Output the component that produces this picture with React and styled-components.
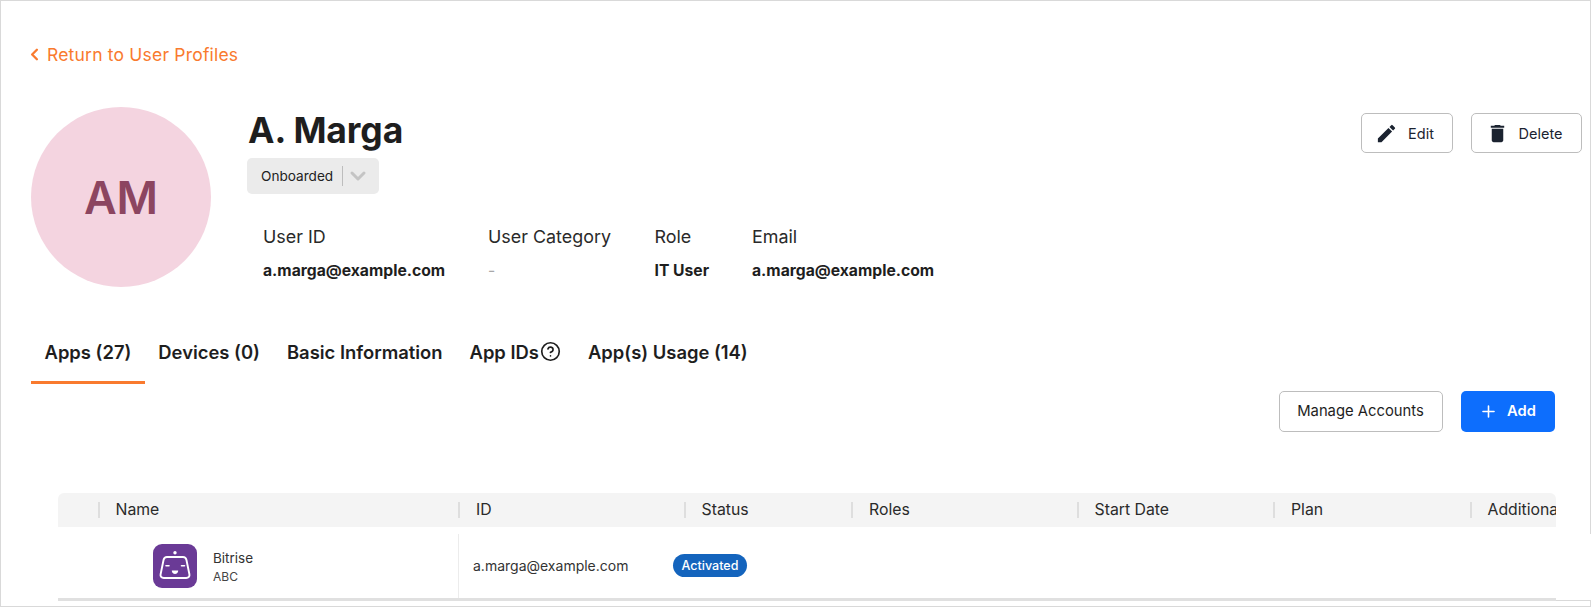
import React from 'react'
import styled, { createGlobalStyle } from 'styled-components'
import { ChevronLeft, ChevronDown, Plus, CircleHelp } from 'lucide-react'
import { MdEdit, MdDelete } from 'react-icons/md'

const Global = createGlobalStyle`
html, body {
  margin: 0;
  padding: 0;
  background: #fff;
  overflow: hidden;
}
* { box-sizing: border-box; }
body {
  font-family: Inter, "Noto Sans", sans-serif;
  color: #1e1e1e;
}
`

//================ data =====================================
const tabs = [
  { label: 'Apps (27)', active: true },
  { label: 'Devices (0)' },
  { label: 'Basic Information' },
  { label: 'App IDs', help: true },
  { label: 'App(s) Usage (14)' },
]

const info = [
  { label: 'User ID', value: 'a.marga@example.com', width: 225 },
  { label: 'User Category', value: '-', width: 166.5, muted: true },
  { label: 'Role', value: 'IT User', width: 97.5 },
  { label: 'Email', value: 'a.marga@example.com', width: 300 },
]

const columns = [
  { label: '', width: 39.5 },
  { label: 'Name', width: 360.5 },
  { label: 'ID', width: 225.5 },
  { label: 'Status', width: 167.5 },
  { label: 'Roles', width: 225.5 },
  { label: 'Start Date', width: 196.5 },
  { label: 'Plan', width: 196.5 },
  { label: 'Additional Info', width: 200 },
]

const BitriseIcon = () => (
  <svg width="44" height="44" viewBox="0 0 44 44">
    <rect width="44" height="44" rx="9" fill="#6a3a96" />
    <circle cx="22" cy="8.7" r="1.7" fill="#fff" />
    <path d="M14 13h16c1.8 0 3 1 3.4 2.8l3 14.4c.5 2.3-.9 3.8-3.2 3.8H10.8c-2.3 0-3.7-1.5-3.2-3.8l3-14.4C11 14 12.2 13 14 13z" fill="none" stroke="#fff" strokeWidth="1.9" />
    <path d="M13 21.8h3M28.5 21.8h3" stroke="#fff" strokeWidth="1.6" strokeLinecap="round" />
    <path d="M18.8 26.6h6.4c0 2.2-1.4 3.4-3.2 3.4s-3.2-1.2-3.2-3.4z" fill="#fff" />
  </svg>
)

const App = () => {
  return (
    <>
      <Global />
      <Page>
        <BackLink>
          <ChevronLeft size={19} strokeWidth={3} />
          <span>Return to User Profiles</span>
        </BackLink>

        <Hero>
          <Avatar>AM</Avatar>
          <Details>
            <Name>A. Marga</Name>
            <StatusPill>
              Onboarded
              <PillDivider />
              <ChevronDown size={24} strokeWidth={3} color="#c4c4c4" />
            </StatusPill>
            <InfoRow>
              {info.map((item) => (
                <InfoCol key={item.label} $width={item.width}>
                  <InfoLabel>{item.label}</InfoLabel>
                  <InfoValue $muted={item.muted}>{item.value}</InfoValue>
                </InfoCol>
              ))}
            </InfoRow>
          </Details>
          <HeroButtons>
            <OutlineButton $width={92}>
              <MdEdit size={23} color="#1b2330" />
              Edit
            </OutlineButton>
            <OutlineButton $width={111}>
              <MdDelete size={23} color="#1b2330" />
              Delete
            </OutlineButton>
          </HeroButtons>
        </Hero>

        <Tabs>
          {tabs.map((tab) => (
            <Tab key={tab.label} $active={tab.active}>
              {tab.label}
              {tab.help && <CircleHelp size={21} strokeWidth={1.9} />}
            </Tab>
          ))}
        </Tabs>

        <Actions>
          <ManageButton>Manage Accounts</ManageButton>
          <AddButton>
            <Plus size={19} strokeWidth={2} />
            Add
          </AddButton>
        </Actions>

        <Table>
          <HeaderRow>
            {columns.map((col, i) => (
              <HeaderCell key={i} $width={col.width} $first={i === 0}>
                {col.label}
              </HeaderCell>
            ))}
          </HeaderRow>
          <Row>
            <NameCell>
              <BitriseIcon />
              <AppText>
                <AppName>Bitrise</AppName>
                <AppSub>ABC</AppSub>
              </AppText>
            </NameCell>
            <IdCell>a.marga@example.com</IdCell>
            <StatusCell>
              <Badge>Activated</Badge>
            </StatusCell>
          </Row>
        </Table>
      </Page>
    </>
  )
}

const Page = styled.div`
  width: 1591px;
  height: 607px;
  border: 1px solid #d9d9d9;
  padding: 41px 8px 0 30px;
`

const BackLink = styled.div`
  display: flex;
  align-items: center;
  gap: 3px;
  height: 24px;
  margin-left: -6px;
  color: #f97a2e;
  font-size: 17.5px;
  letter-spacing: 0.2px;
`

const Hero = styled.div`
  display: flex;
  margin-top: 41px;
  height: 181px;
`

const Avatar = styled.div`
  width: 180px;
  height: 180px;
  flex: none;
  border-radius: 50%;
  background: #f4d4e0;
  color: #8c4560;
  display: flex;
  align-items: center;
  justify-content: center;
  font-size: 45px;
  font-weight: 600;
`

const Details = styled.div`
  margin-left: 36px;
  padding-top: 2px;
`

const Name = styled.h1`
  margin: 0 0 5px 1px;
  font-size: 35.5px;
  line-height: 44px;
  font-weight: 700;
  letter-spacing: -0.1px;
  color: #1e1e1e;
`

const StatusPill = styled.div`
  width: 132px;
  height: 36px;
  background: #ebebeb;
  border-radius: 5px;
  display: flex;
  align-items: center;
  padding-left: 14px;
  font-size: 13.6px;
  color: #222;
`

const PillDivider = styled.span`
  width: 1px;
  height: 20px;
  background: #bdbdbd;
  margin: 0 3px 0 9px;
`

const InfoRow = styled.div`
  display: flex;
  margin: 32px 0 0 16px;
`

const InfoCol = styled.div`
  width: ${(p) => p.$width}px;
  display: flex;
  flex-direction: column;
  gap: 12px;
`

const InfoLabel = styled.div`
  font-size: 17.9px;
  line-height: 22px;
  color: #2a2a2a;
`

const InfoValue = styled.div`
  font-size: 15.7px;
  line-height: 22px;
  font-weight: ${(p) => (p.$muted ? 400 : 700)};
  color: ${(p) => (p.$muted ? '#a8a8a8' : '#1e1e1e')};
  white-space: nowrap;
`

const HeroButtons = styled.div`
  display: flex;
  gap: 18px;
  margin-left: auto;
  margin-top: 6px;
  align-items: flex-start;
`

const OutlineButton = styled.button`
  width: ${(p) => p.$width}px;
  height: 40px;
  background: #fff;
  border: 1px solid #bdbdbd;
  border-radius: 5px;
  display: flex;
  align-items: center;
  justify-content: center;
  gap: 10px;
  padding: 0 5px 0 0;
  font-family: inherit;
  font-size: 14.5px;
  font-weight: 400;
  color: #1b2330;
`

const Tabs = styled.div`
  display: flex;
  margin-top: 46.5px;
`

const Tab = styled.div`
  display: flex;
  align-items: center;
  gap: 1px;
  height: 49px;
  padding: 6px 13.5px 18px;
  font-size: 18.4px;
  line-height: 22px;
  font-weight: 600;
  color: #1e1e1e;
  border-bottom: 3px solid ${(p) => (p.$active ? '#f97a2e' : 'transparent')};
`

const Actions = styled.div`
  display: flex;
  justify-content: flex-end;
  gap: 18px;
  margin-top: 7px;
  margin-right: 27.5px;
`

const ManageButton = styled.button`
  width: 164px;
  height: 41px;
  background: #fff;
  border: 1px solid #bdbdbd;
  border-radius: 5px;
  font-family: inherit;
  font-size: 14.8px;
  font-weight: 400;
  color: #1e1e1e;
  padding: 0;
`

const AddButton = styled.button`
  width: 94px;
  height: 41px;
  background: #0d6efd;
  border: none;
  border-radius: 5px;
  display: flex;
  align-items: center;
  justify-content: center;
  gap: 9px;
  font-family: inherit;
  font-size: 14.7px;
  font-weight: 600;
  color: #fff;
  padding: 0;
`

const Table = styled.div`
  width: 1497.5px;
  margin: 61px 0 0 27px;
`

const HeaderRow = styled.div`
  display: flex;
  height: 34px;
  background: #f4f4f4;
  border-radius: 6px 6px 0 0;
  overflow: hidden;
`

const HeaderCell = styled.div`
  position: relative;
  flex: none;
  width: ${(p) => p.$width}px;
  padding-left: 18px;
  font-size: 15.8px;
  line-height: 34px;
  color: #2a2a2a;
  white-space: nowrap;
  &::before {
    content: ${(p) => (p.$first ? 'none' : '""')};
    position: absolute;
    left: 0;
    top: 9px;
    width: 2px;
    height: 16px;
    background: #dedede;
  }
`

const Row = styled.div`
  position: relative;
  display: flex;
  align-items: center;
  height: 74px;
  padding-top: 7px;
  border-bottom: 3px solid #e0e0e0;
  &::after {
    content: "";
    position: absolute;
    left: 100%;
    top: 7px;
    bottom: -3px;
    width: 36px;
    background: #fff;
    border-bottom: 1px solid #d9d9d9;
  }
`

const NameCell = styled.div`
  width: 400.5px;
  height: 100%;
  flex: none;
  display: flex;
  align-items: center;
  gap: 16px;
  padding: 0 0 0 95px;
  border-right: 1px solid #ececec;
`

const AppText = styled.div`
  display: flex;
  flex-direction: column;
  gap: 4px;
  padding-top: 2px;
`

const AppName = styled.div`
  font-size: 13.5px;
  line-height: 16px;
  color: #333;
`

const AppSub = styled.div`
  font-size: 12px;
  line-height: 14px;
  color: #444;
`

const IdCell = styled.div`
  width: 214.5px;
  flex: none;
  padding-left: 14.5px;
  font-size: 14px;
  color: #333;
`

const StatusCell = styled.div`
  flex: 1;
`

const Badge = styled.span`
  display: inline-block;
  width: 74px;
  height: 23px;
  line-height: 23px;
  text-align: center;
  background: #1464bd;
  border-radius: 12px;
  font-size: 12.5px;
  font-weight: 500;
  color: #fff;
`

export default App
